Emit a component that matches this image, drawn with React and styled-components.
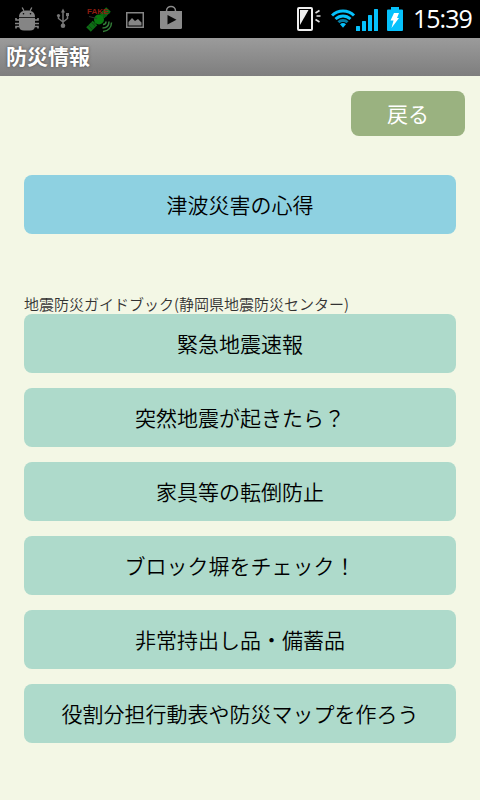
import styled, { createGlobalStyle } from "styled-components";

const GlobalStyle = createGlobalStyle`
* {
    box-sizing: border-box;
}
body {
    margin: 0;
    background: #f3f7e5;
    font-family: "Noto Sans CJK JP", sans-serif;
}
`;

const Screen = styled.div`
display: flex;
flex-direction: column;
width: 480px;
height: 800px;
overflow: hidden;
background: #f3f7e5;
`;

const StatusBar = styled.div`
display: flex;
justify-content: space-between;
height: 38px;
padding: 0 0 0 14px;
background: #000;
`;

const IconGroup = styled.div`
display: flex;
gap: ${props => props.$gap};
`;

const Icon = styled.svg`
display: block;
flex: none;
height: 38px;
`;

const Clock = styled.span`
width: 67px;
margin-left: 10px;
color: #fff;
font-family: "Open Sans", sans-serif;
font-size: 25px;
line-height: 37px;
letter-spacing: -1px;
`;

const TitleBar = styled.h1`
height: 38px;
margin: 0;
padding-left: 6px;
background: linear-gradient(#9b9b9b, #7e7e7e);
color: #fff;
font-size: 21px;
font-weight: 700;
line-height: 35px;
text-shadow: 0 0 3px #444;
`;

const Content = styled.main`
display: flex;
flex-direction: column;
padding: 15px 24px 0;
`;

const BackButton = styled.button`
align-self: flex-end;
width: 114px;
height: 45px;
margin-right: -9px;
padding: 0 0 1px;
border: 0;
border-radius: 8px;
background: #9ab280;
color: #fff;
font-family: inherit;
font-size: 21px;
font-weight: 400;
line-height: 44px;
`;

const MenuButton = styled.button`
flex: none;
height: 59px;
padding: 0 0 1px;
border: 0;
border-radius: 8px;
background: ${props => props.$blue ? "#8ed1e1" : "#aedacb"};
color: #000;
font-family: inherit;
font-size: 21px;
font-weight: 350;
line-height: 58px;
white-space: nowrap;
`;

const Tsunami = styled.section`
display: grid;
margin-top: 39px;
`;

const GuideTitle = styled.h2`
margin: 60px 0 0;
color: #333;
font-size: 15px;
font-weight: 350;
line-height: 20px;
white-space: nowrap;
`;

const GuideList = styled.div`
display: flex;
flex-direction: column;
gap: 15px;
`;

const guides = [
    "緊急地震速報",
    "突然地震が起きたら？",
    "家具等の転倒防止",
    "ブロック塀をチェック！",
    "非常持出し品・備蓄品",
    "役割分担行動表や防災マップを作ろう",
];

function BugIcon() {
    return (
        <Icon width="26" viewBox="14 0 26 38" fill="#858585">
            <path d="M19 17c0-4.500 3-6.500 8-6.500s8 2 8 6.500z" />
            <path d="M19 17.800h16v8.200c0 3-2 4.500-5 4.500h-6c-3 0-5-1.500-5-4.500z" />
            <path d="M24 11l-1.800-3.500M30 11l1.800-3.500" fill="none" stroke="#858585" strokeWidth="1.300" />
            <path d="M19.500 20H16v-2M19.500 23.500H15M19.500 26.500H16v2M34.500 20H38v-2M34.500 23.500H39M34.500 26.500H38v2" fill="none" stroke="#858585" strokeWidth="1.600" />
            <circle cx="23.500" cy="13.800" r="0.800" fill="#000" />
            <circle cx="30.500" cy="13.800" r="0.800" fill="#000" />
        </Icon>
    );
}

function UsbIcon() {
    return (
        <Icon width="14" viewBox="56 0 14 38">
            <path d="M63 12v14M58.500 15v3.500l4.500 3.500M67.500 14v4.500L63 22" fill="none" stroke="#777" strokeWidth="1.500" />
            <path d="M63 8.500l-2 4h4z" fill="#777" />
            <circle cx="58.500" cy="15.500" r="1.600" fill="#777" />
            <path d="M66 13h3v3h-3z" fill="#777" />
            <circle cx="63" cy="25.800" r="2.300" fill="#777" />
        </Icon>
    );
}

function SatelliteIcon() {
    return (
        <Icon width="28" viewBox="86 0 28 38">
            <path d="M88.500 29.500l6.500-6.500M102 16l6.500-6.500" stroke="#0c6c14" strokeWidth="6.500" />
            <path d="M94 24l10-8" stroke="#0a5a10" strokeWidth="2" />
            <circle cx="99" cy="19.500" r="5" fill="#08780f" />
            <path d="M88 25l4.500 4.500M91 22l4.500 4.500M101.500 12l5 5M104.500 9l5 5" stroke="#173d18" strokeWidth="0.900" />
            <path d="M89 16.500l8 2" stroke="#2c332c" strokeWidth="1.200" />
            <path d="M103 24.500c2 0 3-1 3-3M102.500 28c4 0 6.500-2.500 6.500-6.500M103 31.500c5-0.500 8.500-4 8.500-9" fill="none" stroke="#337d38" strokeWidth="1.500" />
            <text x="87" y="13.500" fill="#8c1c10" fontFamily="Liberation Sans" fontSize="8" fontWeight="700">FAKE</text>
        </Icon>
    );
}

function PictureIcon() {
    return (
        <Icon width="18" viewBox="126 0 18 38">
            <rect x="126.750" y="12.750" width="16.500" height="14.500" fill="none" stroke="#858585" strokeWidth="1.500" />
            <path d="M128.500 25.500v-3.500l3.500-4 3 3 3-2 3.500 3.500v3z" fill="#858585" />
        </Icon>
    );
}

function StoreIcon() {
    return (
        <Icon width="22" viewBox="160 0 22 38">
            <path d="M166.500 11c0-6 9-6 9 0" fill="none" stroke="#8b8b8b" strokeWidth="1.500" />
            <path d="M160 11h22v16.500q0 1.500-1.500 1.500h-19q-1.500 0-1.500-1.500z" fill="#8b8b8b" />
            <path d="M167.500 15v9.500l9-4.750z" fill="#080808" />
        </Icon>
    );
}

function VibrateIcon() {
    return (
        <Icon width="25" viewBox="297 0 25 38">
            <rect x="298" y="8" width="14" height="22" rx="1" fill="none" stroke="#eee" strokeWidth="2" />
            <path d="M300 10h8.500l-8.500 15z" fill="#eee" />
            <path d="M315.500 13l4-2.500M316.500 16h4M315.500 19.500l4 2.500" stroke="#ddd" strokeWidth="1.700" />
        </Icon>
    );
}

function WifiIcon() {
    return (
        <Icon width="25" viewBox="331 0 25 38">
            <path d="M332 15.500c6-6 16-6 22 0M335.500 19c4.500-4 10.500-4 15 0" fill="none" stroke="#06c1fc" strokeWidth="3" />
            <path d="M338.500 22.300c2.500-2.500 6.500-2.500 9 0" fill="none" stroke="#067da3" strokeWidth="3" />
            <path d="M340 24.300c1.700-1.700 4.300-1.700 6 0l-3 3.500z" fill="#06c1fc" />
        </Icon>
    );
}

function SignalIcon() {
    return (
        <Icon width="22" viewBox="356 0 22 38" fill="#06c1fc">
            <rect x="356" y="26" width="4" height="5" rx="0.500" />
            <rect x="362" y="21" width="4" height="10" rx="0.500" />
            <rect x="368" y="15" width="4" height="16" rx="0.500" />
            <rect x="374" y="9" width="4" height="22" rx="0.500" />
        </Icon>
    );
}

function BatteryIcon() {
    return (
        <Icon width="16" viewBox="387 0 16 38">
            <path d="M391 7h8v2.500h3q1 0 1 1V30q0 1-1 1h-14q-1 0-1-1V10.500q0-1 1-1h3z" fill="#06c1fc" />
            <path d="M394 13h5l-2 5h2l-7.500 10 2-7.500h-3z" fill="#fff" />
        </Icon>
    );
}

export default function App() {
    return (
        <Screen>
            <GlobalStyle />
            <StatusBar>
                <IconGroup $gap="16px">
                    <BugIcon />
                    <UsbIcon />
                    <IconGroup $gap="12px">
                        <SatelliteIcon />
                        <PictureIcon />
                    </IconGroup>
                    <StoreIcon />
                </IconGroup>
                <IconGroup $gap="0">
                    <IconGroup $gap="9px">
                        <VibrateIcon />
                        <WifiIcon />
                    </IconGroup>
                    <IconGroup $gap="9px">
                        <SignalIcon />
                        <BatteryIcon />
                    </IconGroup>
                    <Clock>15:39</Clock>
                </IconGroup>
            </StatusBar>
            <TitleBar>防災情報</TitleBar>
            <Content>
                <BackButton>戻る</BackButton>
                <Tsunami>
                    <MenuButton $blue>津波災害の心得</MenuButton>
                </Tsunami>
                <GuideTitle>地震防災ガイドブック(静岡県地震防災センター)</GuideTitle>
                <GuideList>
                    {guides.map(guide => (
                        <MenuButton key={guide}>{guide}</MenuButton>
                    ))}
                </GuideList>
            </Content>
        </Screen>
    );
}
